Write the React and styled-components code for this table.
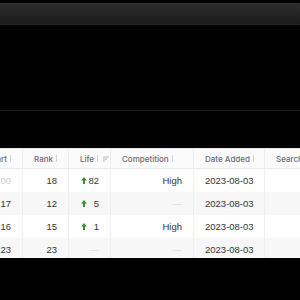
import React from 'react';
import styled, { createGlobalStyle } from 'styled-components';

const GlobalStyle = createGlobalStyle`
  body {
    margin: 0;
    background: #000000;
    font-family: "Liberation Sans", Arial, sans-serif;
  }
`;

const Page = styled.div`
  width: 300px;
  height: 300px;
  overflow: hidden;
  background: #000000;
`;

const TopBar = styled.div`
  margin-top: 3px;
  height: 21px;
  background: linear-gradient(180deg, #2d2d2d 0%, #1c1c1c 100%);
  border-bottom: 1px solid #262626;
`;

const DarkPanel = styled.div`
  height: 85px;
  border-bottom: 1px solid #1f1f1f;
`;

const TableWrap = styled.div`
  margin-top: 37px;
  height: 110px;
  overflow: hidden;
  background: #ffffff;
`;

const Grid = styled.div`
  margin-left: -60px;
  width: 460px;
`;

const cols = '83px 46px 42px 83px 71px 135px';

const HeadRow = styled.div`
  display: grid;
  grid-template-columns: ${cols};
  height: 21px;
  background: #fbfbfc;
  border-top: 1px solid #e6e7ea;
  border-bottom: 1px solid #e9eaed;
  box-sizing: border-box;
`;

const Row = styled.div`
  display: grid;
  grid-template-columns: ${cols};
  height: 23px;
  background: ${(p) => (p.$striped ? '#f7f7f8' : '#ffffff')};
`;

const HeadCell = styled.div`
  display: flex;
  align-items: center;
  justify-content: ${(p) => (p.$end ? 'flex-end' : 'flex-start')};
  padding: 0 ${(p) => (p.$tight ? '1px' : '11px')} 0 11px;
  border-right: 1px solid #eceef1;
  font-family: Inter, "Liberation Sans", sans-serif;
  font-size: 8px;
  font-weight: 500;
  color: #676b74;
  white-space: nowrap;
  overflow: hidden;
`;

const Label = styled.span`
  display: flex;
  align-items: center;
  gap: 3px;
  flex: ${(p) => (p.$grow ? 1 : 'none')};
`;

const Sep = styled.span`
  width: 1px;
  height: 7px;
  background: #cfd2d7;
`;

const Cell = styled.div`
  display: flex;
  align-items: center;
  justify-content: ${(p) => p.$align || 'flex-end'};
  padding: 0 11px;
  border-right: 1px solid #eceef1;
  font-size: 9.5px;
  color: ${(p) => (p.$muted ? '#c9cbcf' : '#333438')};
  white-space: nowrap;
  overflow: hidden;
`;

const LifeCell = styled(Cell)`
  justify-content: space-between;
  padding: 0 11px 0 12px;
`;

const Dash = styled.span`
  color: #d6d8dc;
`;

const UpArrow = () => (
  <svg width="6" height="7" viewBox="0 0 6 7">
    <path d="M3 0 L6 3.4 H4 V7 H2 V3.4 H0 Z" fill="#3f8f3a" />
  </svg>
);

const SortIcon = () => (
  <svg width="6" height="6" viewBox="0 0 6 6">
    <path d="M0 1 H6 M0 3 H4 M0 5 H2" stroke="#a4a8b0" strokeWidth="0.8" />
  </svg>
);

const rows = [
  { start: '100', startMuted: true, rank: '18', life: '82', comp: 'High', date: '2023-08-03' },
  { start: '17', rank: '12', life: '5', comp: null, date: '2023-08-03' },
  { start: '16', rank: '15', life: '1', comp: 'High', date: '2023-08-03' },
  { start: '23', rank: '23', life: null, comp: null, date: '2023-08-03' },
];

export default function App() {
  return (
    <>
      <GlobalStyle />
      <Page>
        <TopBar />
        <DarkPanel />
        <TableWrap>
          <Grid>
            <HeadRow>
              <HeadCell $end><Label>Start<Sep /></Label></HeadCell>
              <HeadCell><Label>Rank<Sep /></Label></HeadCell>
              <HeadCell $tight>
                <Label $grow>Life<Sep /></Label>
                <SortIcon />
              </HeadCell>
              <HeadCell><Label>Competition<Sep /></Label></HeadCell>
              <HeadCell><Label>Date Added<Sep /></Label></HeadCell>
              <HeadCell><Label>Search Volume<Sep /></Label></HeadCell>
            </HeadRow>
            {rows.map((r, i) => (
              <Row key={i} $striped={i % 2 === 1}>
                <Cell $muted={r.startMuted}>{r.start}</Cell>
                <Cell>{r.rank}</Cell>
                {r.life ? (
                  <LifeCell>
                    <UpArrow />
                    <span>{r.life}</span>
                  </LifeCell>
                ) : (
                  <Cell><Dash>—</Dash></Cell>
                )}
                <Cell>{r.comp ? r.comp : <Dash>—</Dash>}</Cell>
                <Cell $align="flex-start">{r.date}</Cell>
                <Cell />
              </Row>
            ))}
          </Grid>
        </TableWrap>
      </Page>
    </>
  );
}
